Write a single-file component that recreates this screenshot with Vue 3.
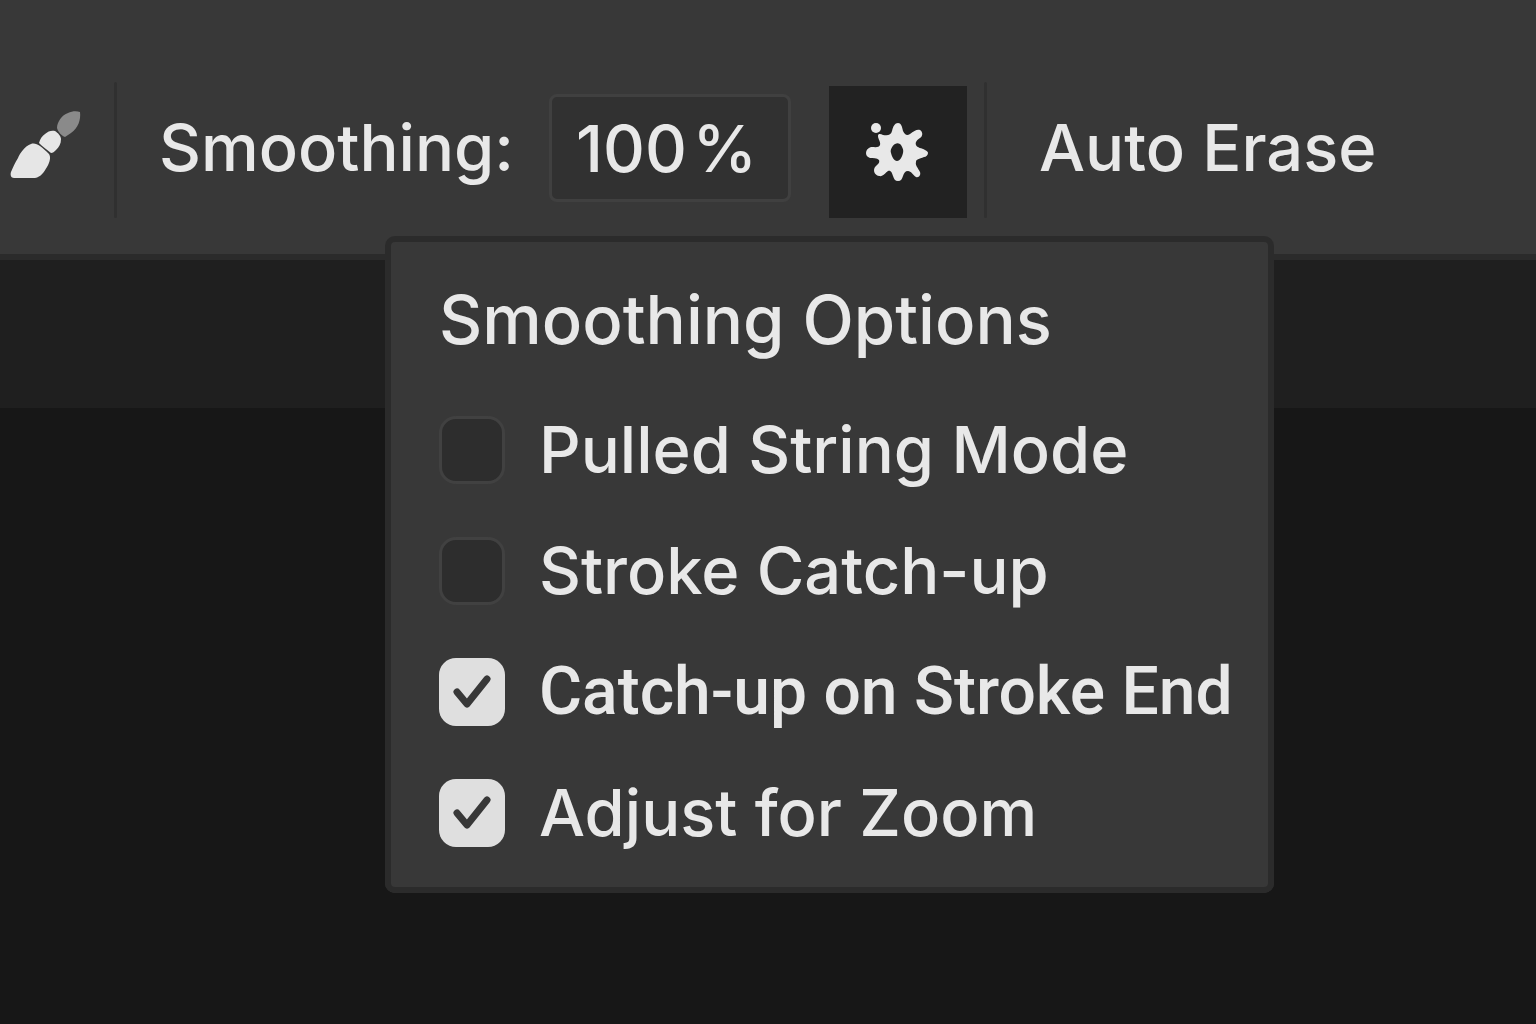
<template>
  <div class="workspace">
    <header class="toolbar">
      <button class="brush" type="button" aria-label="Brush">
        <svg width="84" height="84" viewBox="0 0 84 84">
          <path
            class="handle"
            d="M80 4 C81 12 78 20 71 25 L65 29 C62 28 58 24 57 20 C57 14 62 7 68 5 C72 3 77 3 80 4 Z"
          />
          <path
            class="bristle"
            d="M39 35 C40 31 42 28 45 26 C48 23 52 22 55 23 C58 25 61 28 61 31 C61 36 59 39 56 42 C54 44 53 45 51 45 C47 42 42 38 39 35 Z"
          />
          <path
            class="bristle"
            d="M31 36 C34 35 37 36 40 38 C43 40 46 43 49 46 C51 49 50 54 47 59 C44 64 41 69 35 70 L14 70 C11 70 10 67 11 64 C13 59 15 55 18 50 C20 45 25 38 31 36 Z"
          />
        </svg>
      </button>
      <span class="separator"></span>
      <label class="label" for="smoothing">Smoothing:</label>
      <input id="smoothing" v-model="smoothing" class="amount" type="text" />
      <div class="options">
        <button
          class="gear"
          type="button"
          aria-label="Smoothing options"
          :aria-expanded="open"
          @click="open = !open"
        >
          <svg width="66" height="66" viewBox="0 0 66 66">
            <ellipse cx="11" cy="9" rx="5" ry="5" />
            <path
              fill-rule="evenodd"
              d="M27 12 C28 7 30 4 33 4 C36 4 37 7 38 12 C40 16 42 17 45 15 C49 12 52 10 55 11 C58 13 58 17 55 19 C52 21 50 23 51 26 C52 29 57 29 60 31 C62 32 63 33 63 34 C63 36 61 38 59 38 C54 40 51 40 51 43 C50 46 53 49 55 53 C56 56 54 59 51 58 C48 56 46 52 43 52 C40 52 39 54 38 57 C37 60 36 62 33 62 C30 62 29 60 28 57 C27 54 26 51 23 52 C20 54 18 58 14 57 C9 56 8 51 10 48 C13 45 15 44 14 41 C12 39 8 39 5 39 C2 38 1 36 1 34 C1 31 3 29 6 28 C10 28 14 29 15 26 C16 23 13 20 13 17 C13 14 16 15 18 16 C23 17 26 16 27 12 Z M30 25 C27 27 25 31 26 34 C27 38 29 42 32 42 C35 42 37 38 38 34 C39 31 37 27 35 25 C33 24 32 24 30 25 Z"
            />
          </svg>
        </button>
        <fieldset v-if="open" class="menu">
          <legend class="title">Smoothing Options</legend>
          <label
            v-for="item in items"
            :key="item.id"
            class="row"
            :class="{ narrow: item.narrow }"
            :for="item.id"
          >
            <input :id="item.id" v-model="item.checked" class="check" type="checkbox" />
            <span class="box">
              <svg v-if="item.checked" width="66" height="66" viewBox="0 0 66 66">
                <path d="M18 34 L28 46 L48 21" />
              </svg>
            </span>
            <span>{{ item.text }}</span>
          </label>
        </fieldset>
      </div>
      <span class="separator after"></span>
      <button class="erase" type="button">Auto Erase</button>
    </header>
    <div class="tabs"></div>
    <main class="canvas"></main>
  </div>
</template>

<script setup>
import { ref } from "vue";

const smoothing = ref("100\u200a%");
const open = ref(true);
const items = ref([
  { id: "pulled", text: "Pulled String Mode", checked: false },
  { id: "catchup", text: "Stroke Catch-up", checked: false },
  { id: "strokeend", text: "Catch-up on Stroke End", checked: true, narrow: true },
  { id: "zoom", text: "Adjust for Zoom", checked: true },
]);
</script>

<style>
body {
  margin: 0;
  background-color: #171717;
}
</style>

<style scoped>
.workspace {
  display: flex;
  flex-direction: column;
  min-height: 100vh;
  overflow: hidden;
  font-family: Inter, "Liberation Sans", sans-serif;
  font-size: 65px;
  font-weight: 500;
  line-height: 80px;
  color: #e8e8e8;
  white-space: nowrap;
}
button,
input {
  font: inherit;
  color: inherit;
}
button {
  padding: 0;
  border: none;
  background: none;
  cursor: pointer;
}
svg {
  display: block;
}
.toolbar {
  display: flex;
  align-items: center;
  padding: 82px 0 36px;
  background-color: #383838;
  border-bottom: 6px solid #2b2b2b;
}
.brush {
  margin-right: 30px;
}
.handle {
  fill: #8a8a8a;
}
.bristle {
  fill: #e6e6e6;
}
.separator {
  width: 3px;
  height: 136px;
  border-radius: 2px;
  background-color: #303030;
}
.label {
  width: 390px;
  margin-bottom: 4px;
  margin-left: 42px;
}
.amount {
  box-sizing: border-box;
  width: 242px;
  height: 108px;
  margin-bottom: 4px;
  padding: 0 24px;
  border: 3px solid #404040;
  border-radius: 8px;
  background-color: #313131;
  outline: none;
}
.options {
  position: relative;
  margin-top: 4px;
  margin-left: 38px;
}
.gear {
  display: flex;
  align-items: center;
  justify-content: center;
  width: 138px;
  height: 132px;
  background-color: #222222;
}
.gear svg {
  fill: #e8e8e8;
}
.after {
  margin-left: 17px;
}
.erase {
  margin-bottom: 4px;
  margin-left: 52px;
}
.menu {
  position: absolute;
  top: 150px;
  left: -444px;
  z-index: 1;
  box-sizing: border-box;
  min-width: 889px;
  margin: 0;
  padding: 38px 34px 14px 48px;
  border: 6px solid #2b2b2b;
  border-radius: 10px;
  background-color: #383838;
}
.title {
  float: left;
  width: 100%;
  padding: 0 0 29px;
  font-size: 67px;
}
.row {
  display: flex;
  clear: both;
  align-items: center;
  gap: 34px;
  height: 121px;
  cursor: pointer;
}
.narrow {
  font-family: Roboto, "Liberation Sans", sans-serif;
  font-size: 66px;
}
.check {
  position: absolute;
  opacity: 0;
}
.box {
  box-sizing: border-box;
  flex: none;
  width: 66px;
  height: 68px;
  border: 3px solid #414141;
  border-radius: 17px;
  background-color: #2d2d2d;
}
.check:checked + .box {
  border: none;
  background-color: #dfdfdf;
}
.check:focus-visible + .box {
  outline: 3px solid #8a8a8a;
}
.box path {
  fill: none;
  stroke: #383838;
  stroke-width: 7;
  stroke-linecap: round;
  stroke-linejoin: round;
}
.tabs {
  height: 148px;
  background-color: #1f1f1f;
}
.canvas {
  flex: 1;
  background-color: #171717;
}
</style>
